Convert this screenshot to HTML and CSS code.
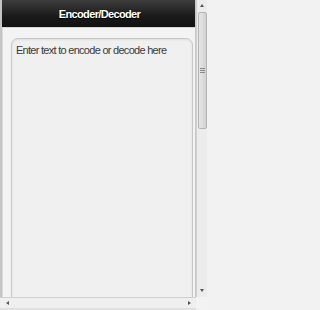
FILE: index.html
```html
<!DOCTYPE html>
<html>
<head>
<meta charset="utf-8">
<link rel="stylesheet" href="styles.css">
</head>
<body>
<div class="frame">
  <div class="page">
    <div class="header"><span class="title">Encoder/Decoder</span></div>
    <div class="content">
      <div class="input">Enter text to encode or decode here</div>
    </div>
  </div>
  <div class="vscroll">
    <span class="arrow up"></span>
    <div class="vthumb"><span class="grip"></span></div>
    <span class="vspacer"></span>
    <span class="arrow down"></span>
  </div>
  <div class="hscroll">
    <span class="arrow left"></span>
    <span class="arrow right"></span>
  </div>
  <div class="corner"></div>
</div>
</body>
</html>
```
FILE: styles.css
```css
html, body {
  margin: 0;
  padding: 0;
}
body {
  width: 207px;
  height: 310px;
  overflow: hidden;
  background: #f2f2f2;
  font-family: "Liberation Sans", Arial, sans-serif;
}
.frame {
  display: grid;
  grid-template-columns: 196px 11px;
  grid-template-rows: 297px 13px;
  height: 310px;
}
.page {
  display: flex;
  flex-direction: column;
  overflow: hidden;
  border-left: 2px solid #c4c4c4;
  border-right: 1px solid #c8c8c8;
}
.header {
  height: 27px;
  flex: none;
  display: flex;
  align-items: center;
  justify-content: center;
  background: linear-gradient(#3d3d3d, #1a1a1a 60%, #111);
  border-bottom: 1px solid #d6d6d6;
}
.title {
  color: #fff;
  font-weight: bold;
  font-size: 11px;
  letter-spacing: -0.65px;
  text-shadow: 0 1px 1px #000;
  margin-left: 2px;
}
.content {
  flex: 1;
  padding: 10px 2px 0 9px;
  background: #f3f3f3;
  box-shadow: inset 1px 0 0 #dadada;
  overflow: hidden;
}
.input {
  height: 400px;
  border: 1px solid #c6c6c6;
  border-radius: 7px;
  background: #f0f0f0;
  box-shadow: inset 0 1px 2px rgba(0,0,0,0.08);
  padding: 5px 4px;
  color: #3a3a3a;
  font-size: 11px;
  line-height: 12px;
  letter-spacing: -0.72px;
}
.vscroll {
  display: flex;
  flex-direction: column;
  align-items: center;
  background: #ececec;
  border-left: 1px solid #d0d0d0;
  padding-top: 4px;
}
.vthumb {
  width: 7px;
  height: 115px;
  margin-top: 5px;
  border: 1px solid #b4b4b4;
  border-radius: 2px;
  background: linear-gradient(90deg, #e6e6e6, #d2d2d2);
  display: flex;
  align-items: center;
  justify-content: center;
}
.grip {
  width: 5px;
  height: 5px;
  background: repeating-linear-gradient(#888 0 1px, transparent 1px 2px);
}
.vspacer {
  flex: 1;
}
.arrow {
  width: 0;
  height: 0;
  display: block;
}
.up {
  border-left: 2px solid transparent;
  border-right: 2px solid transparent;
  border-bottom: 3px solid #555;
}
.down {
  border-left: 2px solid transparent;
  border-right: 2px solid transparent;
  border-top: 3px solid #555;
  margin-bottom: 5px;
}
.hscroll {
  display: flex;
  align-items: center;
  justify-content: space-between;
  padding: 0 5px 0 6px;
  background: #efefef;
  border-top: 1px solid #cfcfcf;
  border-bottom: 2px solid #e0e0e0;
}
.left {
  border-top: 2px solid transparent;
  border-bottom: 2px solid transparent;
  border-right: 3px solid #555;
}
.right {
  border-top: 2px solid transparent;
  border-bottom: 2px solid transparent;
  border-left: 3px solid #555;
}
.corner {
  background: #f3f3f3;
}
```
